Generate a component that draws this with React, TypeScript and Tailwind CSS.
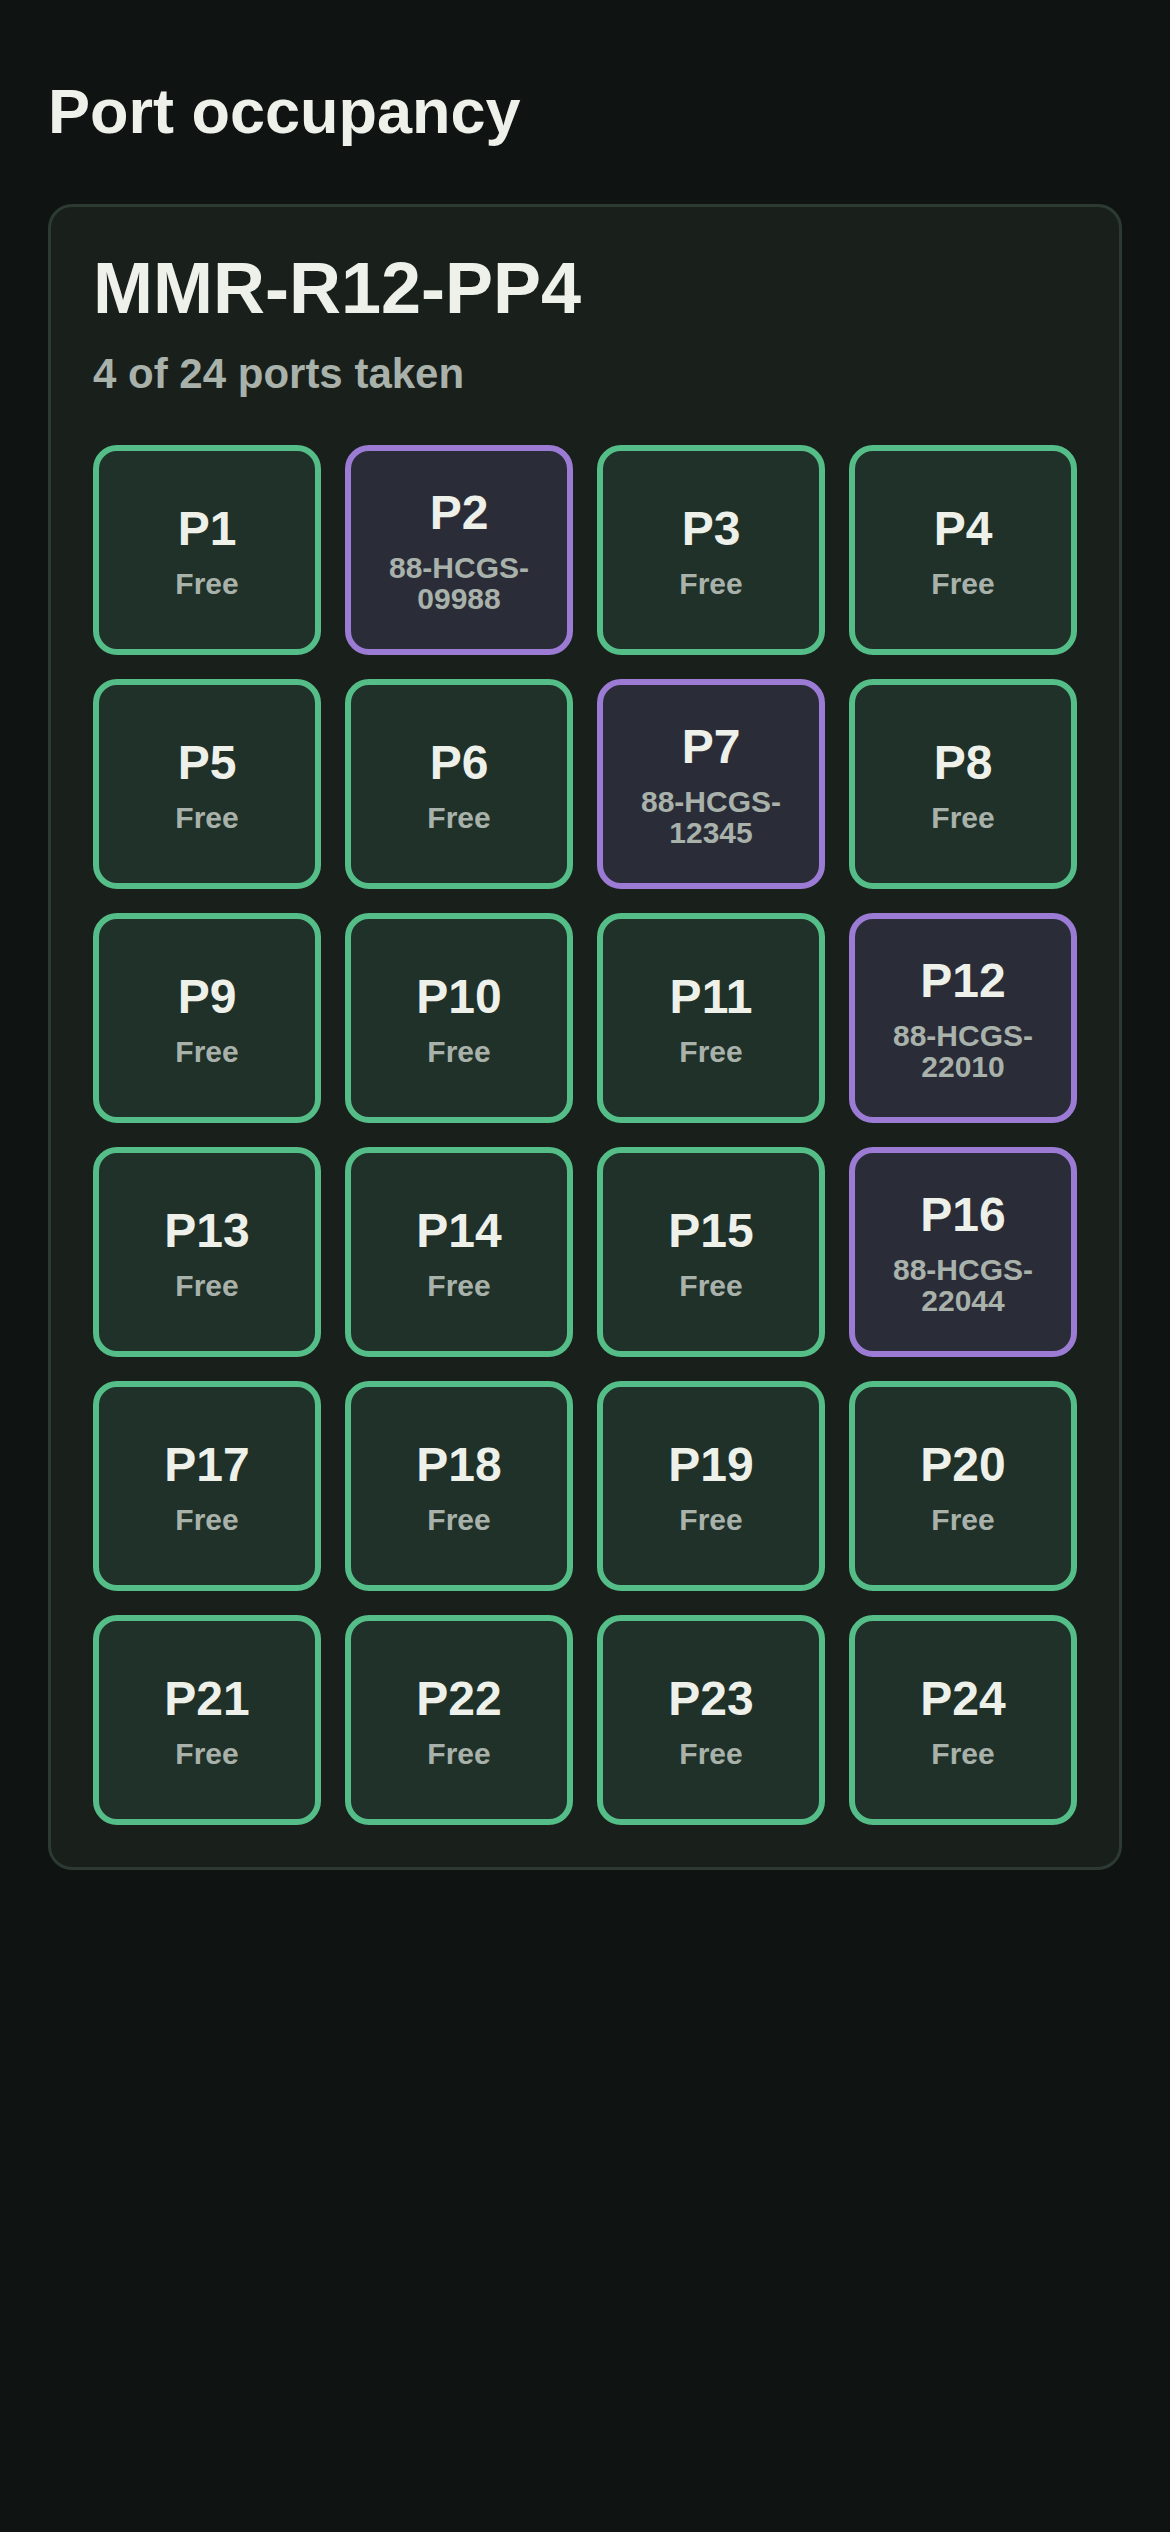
import React from "react";

type Port = {
  id: number;
  holder: string | null;
};

const taken: Record<number, string> = {
  2: "88-HCGS-09988",
  7: "88-HCGS-12345",
  12: "88-HCGS-22010",
  16: "88-HCGS-22044",
};

const ports: Port[] = Array.from({ length: 24 }, (_, i) => ({
  id: i + 1,
  holder: taken[i + 1] ?? null,
}));

function PortTile({ port }: { port: Port }) {
  const isTaken = port.holder !== null;
  return (
    <div
      className={
        isTaken
          ? "h-[210px] rounded-[24px] border-[6px] border-[#9b7bd4] bg-[#2a2d38] flex flex-col items-center justify-center text-center"
          : "h-[210px] rounded-[24px] border-[6px] border-[#55bd87] bg-[#1f3128] flex flex-col items-center justify-center text-center"
      }
    >
      <div className="text-[48px] leading-[54px] font-bold text-[#eef0ea]">P{port.id}</div>
      <div className="mt-[12px] text-[30px] leading-[31px] font-bold text-[#a9b1ab] px-[6px]">
        {isTaken ? port.holder : "Free"}
      </div>
    </div>
  );
}

export default function App() {
  const takenCount = ports.filter((p) => p.holder !== null).length;

  return (
    <div
      className="min-h-[2532px] bg-[#0f1312] px-[48px] pt-[75px]"
      style={{ fontFamily: '"Liberation Sans", Arial, sans-serif' }}
    >
      <h1 className="text-[63px] leading-[72px] font-bold text-[#eef0ea]">Port occupancy</h1>

      <div className="mt-[57px] rounded-[24px] border-[3px] border-[#2d3a34] bg-[#19201c] p-[42px]">
        <h2 className="text-[72px] leading-[79px] font-bold text-[#eef0ea]">MMR-R12-PP4</h2>
        <p className="mt-[19px] text-[42px] leading-[54px] font-bold text-[#a9b1ab]">
          {takenCount} of {ports.length} ports taken
        </p>

        <div className="mt-[44px] grid grid-cols-4 gap-[24px]">
          {ports.map((port) => (
            <PortTile key={port.id} port={port} />
          ))}
        </div>
      </div>
    </div>
  );
}
